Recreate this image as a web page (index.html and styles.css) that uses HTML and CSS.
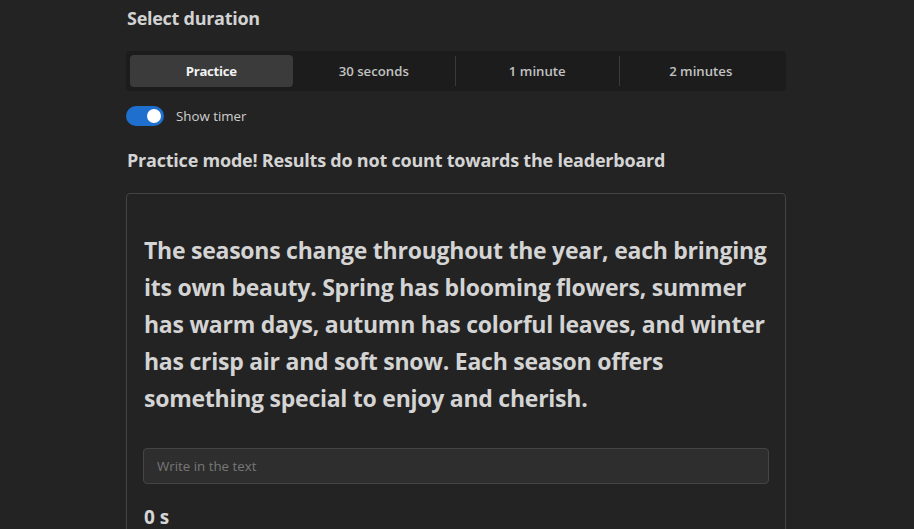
FILE: index.html
```html
<!DOCTYPE html>
<html>
<head>
<meta charset="utf-8">
<link rel="stylesheet" href="styles.css">
</head>
<body>
<main class="page">
  <h2 class="title">Select duration</h2>
  <div class="segments">
    <button class="seg active">Practice</button>
    <button class="seg">30 seconds</button>
    <span class="sep"></span>
    <button class="seg">1 minute</button>
    <span class="sep"></span>
    <button class="seg">2 minutes</button>
  </div>
  <label class="toggle-row">
    <span class="toggle"><span class="knob"></span></span>
    <span class="toggle-label">Show timer</span>
  </label>
  <p class="notice">Practice mode! Results do not count towards the leaderboard</p>
  <section class="card">
    <p class="passage">The seasons change throughout the year, each bringing its own beauty. Spring has blooming flowers, summer has warm days, autumn has colorful leaves, and winter has crisp air and soft snow. Each season offers something special to enjoy and cherish.</p>
    <input class="entry" type="text" placeholder="Write in the text">
    <div class="timer">0 s</div>
  </section>
</main>
</body>
</html>
```
FILE: styles.css
```css
html, body {
  margin: 0;
  padding: 0;
  background: #232323;
  height: 100%;
  overflow: hidden;
}
body {
  font-family: "Open Sans", "Noto Sans", sans-serif;
  color: #d6d6d6;
}
.page {
  width: 660px;
  margin-left: 126px;
  display: flex;
  flex-direction: column;
}
.title {
  margin: 6px 0 0 1px;
  font-size: 18px;
  font-weight: 700;
  line-height: 24px;
  letter-spacing: -0.27px;
  color: #d2d2d2;
}
.segments {
  margin-top: 21px;
  height: 40px;
  box-sizing: border-box;
  padding: 4px;
  background: #1c1c1c;
  border-radius: 4px;
  display: flex;
  align-items: center;
}
.seg {
  flex: 1;
  height: 32px;
  border: 0;
  background: transparent;
  color: #c2c2c2;
  font-family: inherit;
  font-size: 13.2px;
  font-weight: 600;
  border-radius: 4px;
  padding: 0;
}
.seg.active {
  background: #3b3b3b;
  color: #f2f2f2;
  font-weight: 700;
  letter-spacing: -0.3px;
}
.sep {
  width: 1px;
  height: 30px;
  background: #3a3a3a;
}
.toggle-row {
  margin-top: 15px;
  display: flex;
  align-items: center;
  gap: 12px;
}
.toggle {
  width: 38px;
  height: 20px;
  border-radius: 10px;
  background: #1f6fcf;
  display: flex;
  align-items: center;
  justify-content: flex-end;
  padding: 0 3px;
  box-sizing: border-box;
}
.knob {
  width: 14px;
  height: 14px;
  border-radius: 50%;
  background: #fff;
}
.toggle-label {
  font-size: 13.3px;
  color: #cfcfcf;
}
.notice {
  margin: 22px 0 0 1px;
  font-size: 18px;
  font-weight: 700;
  line-height: 24px;
  letter-spacing: -0.22px;
  color: #d4d4d4;
}
.card {
  margin-top: 21px;
  border: 1px solid #444;
  border-radius: 4px;
  padding: 38px 16px 16px;
  display: flex;
  flex-direction: column;
}
.passage {
  margin: 0 0 31px 1px;
  font-size: 23px;
  font-weight: 700;
  line-height: 37px;
  letter-spacing: -0.25px;
  color: #d4d4d4;
}
.entry {
  height: 36px;
  box-sizing: border-box;
  background: #2e2e2e;
  border: 1px solid #454545;
  border-radius: 4px;
  padding: 0 13px;
  font-family: inherit;
  font-size: 13.3px;
  color: #ddd;
  outline: none;
}
.entry::placeholder {
  color: #777;
}
.timer {
  margin-top: 20px;
  margin-left: 1px;
  font-size: 19px;
  font-weight: 700;
  line-height: 26px;
  color: #d6d6d6;
}
```
